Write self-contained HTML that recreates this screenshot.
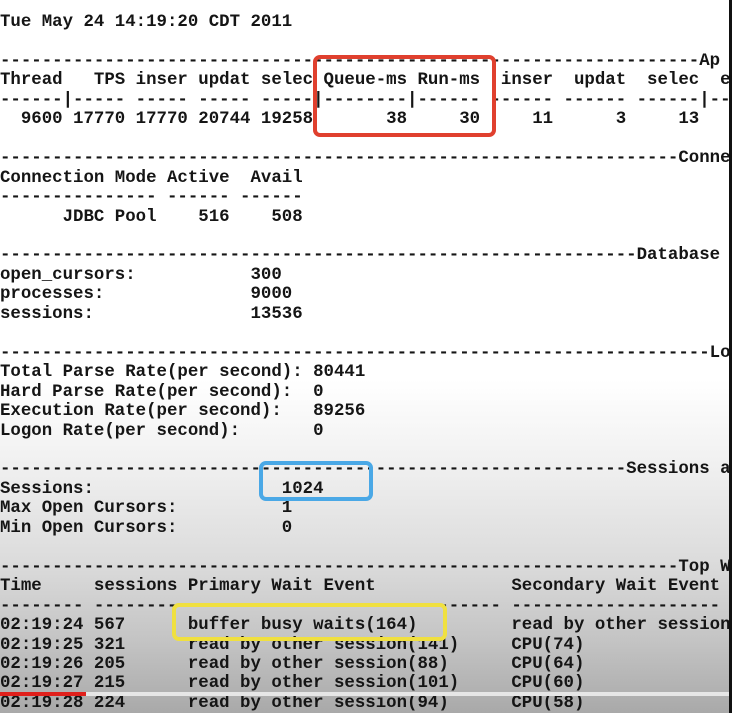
<!DOCTYPE html>
<html><head><meta charset="utf-8">
<style>
html,body{margin:0;padding:0;}
body{width:732px;height:713px;overflow:hidden;position:relative;
background:linear-gradient(to bottom,#fff 0px,#fff 380px,#f1f1f1 460px,#dcdcdc 560px,#c4c4c4 640px,#a9a9a9 713px);}
pre{position:absolute;left:0;top:13px;margin:0;font-family:"Liberation Mono",monospace;font-weight:bold;
font-size:17.4px;line-height:19.45px;color:#151515;letter-spacing:0;}
.box{position:absolute;border-radius:7px;box-sizing:border-box;}
</style></head><body>
<pre>Tue May 24 14:19:20 CDT 2011

-------------------------------------------------------------------Ap
Thread   TPS inser updat selec Queue-ms Run-ms  inser  updat  selec  e
------|----- ----- ----- -----|--------|------ ------ ------ ------|--
  9600 17770 17770 20744 19258       38     30     11      3     13

-----------------------------------------------------------------Conne
Connection Mode Active  Avail
--------------- ------ ------
      JDBC Pool    516    508

-------------------------------------------------------------Database
open_cursors:           300
processes:              9000
sessions:               13536

--------------------------------------------------------------------Lo
Total Parse Rate(per second): 80441
Hard Parse Rate(per second):  0
Execution Rate(per second):   89256
Logon Rate(per second):       0

------------------------------------------------------------Sessions a
Sessions:                  1024
Max Open Cursors:          1
Min Open Cursors:          0

-----------------------------------------------------------------Top W
Time     sessions Primary Wait Event             Secondary Wait Event
-------- -------- ------------------------------ --------------------
02:19:24 567      buffer busy waits(164)         read by other session
02:19:25 321      read by other session(141)     CPU(74)
02:19:26 205      read by other session(88)      CPU(64)
02:19:27 215      read by other session(101)     CPU(60)
02:19:28 224      read by other session(94)      CPU(58)</pre>
<div class="box" style="left:313px;top:55px;width:183px;height:82px;border:4px solid #e0402e;"></div>
<div class="box" style="left:259px;top:461px;width:114px;height:40px;border:4px solid #4aa8e6;"></div>
<div class="box" style="left:172px;top:603px;width:275px;height:38px;border:4px solid #f0e040;"></div>
<div style="position:absolute;left:0;top:692px;width:732px;height:4px;background:#e6e6e6;"></div>
<div style="position:absolute;left:0;top:692px;width:86px;height:4px;background:#e0201c;"></div>
<div style="position:absolute;left:729px;top:0;width:3px;height:713px;background:#111;"></div>
</body></html>
